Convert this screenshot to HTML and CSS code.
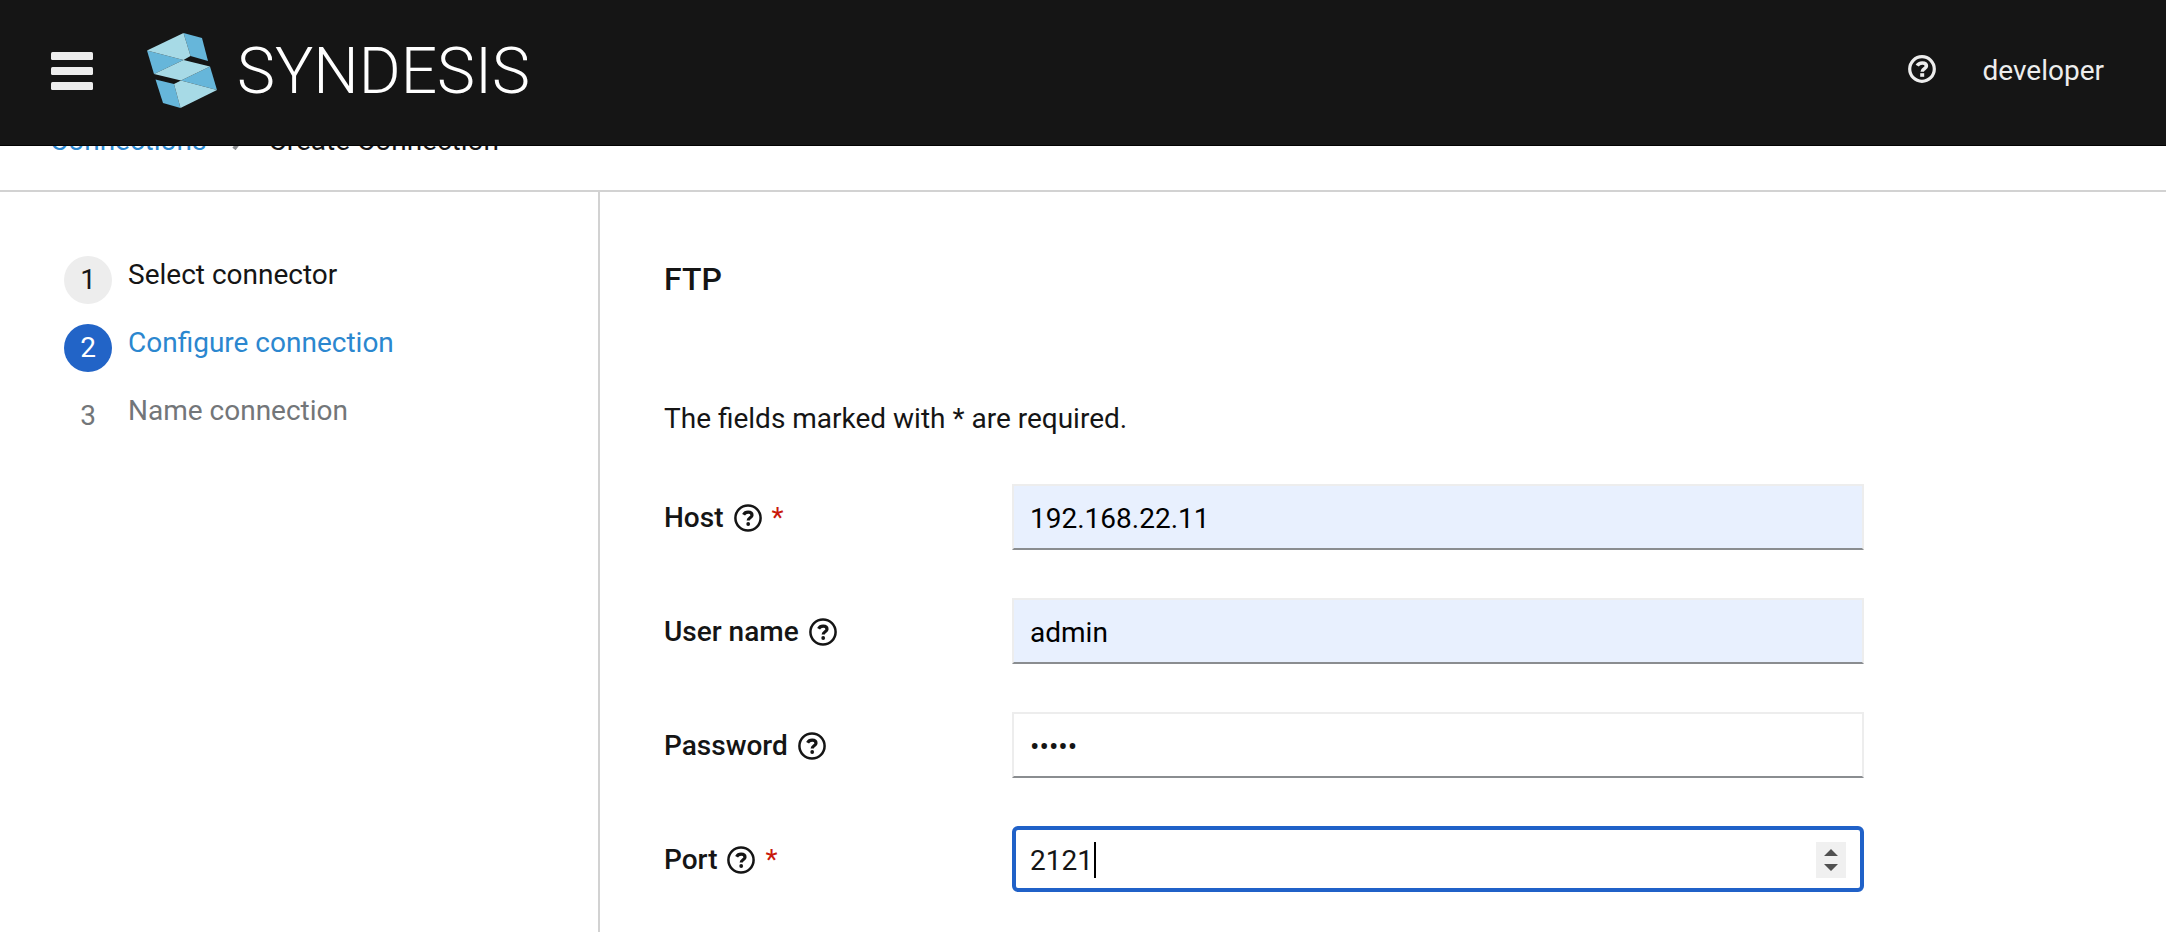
FILE: index.html
```
<!DOCTYPE html>
<html lang="en">
<head>
<meta charset="utf-8">
<title>Syndesis</title>
<meta name="viewport" content="width=device-width, initial-scale=1">
<link rel="stylesheet" href="styles.css">
</head>
<body>
<svg class="sprite" aria-hidden="true">
  <symbol id="help" viewBox="0 0 28 28">
    <circle cx="14" cy="14" r="12.6" fill="none" stroke="currentColor" stroke-width="2.5"/>
    <path d="M9.6 10.800C10.600 8.800 12.200 8.200 14.100 8.200C16.600 8.200 18 9.400 18 11.200C18 13.800 14.200 13.800 14.200 16.500" fill="none" stroke="currentColor" stroke-width="3.2"/>
    <circle cx="14.2" cy="20" r="1.900" fill="currentColor"/>
  </symbol>
  <symbol id="help-bold" viewBox="0 0 28 28">
    <circle cx="14" cy="14" r="12.3" fill="none" stroke="currentColor" stroke-width="3.2"/>
    <path d="M9.200 10.700C10.500 8.500 12.200 8 14.200 8C16.900 8 18.400 9.200 18.400 11.100C18.400 14 14.200 13.700 14.200 16.800" fill="none" stroke="currentColor" stroke-width="3.600"/>
    <rect x="12.200" y="18.200" width="4" height="3.600" fill="currentColor"/>
  </symbol>
</svg>

<header class="masthead">
  <button class="menu-toggle" type="button" aria-label="Toggle navigation">
    <svg viewBox="0 0 42 38" width="42" height="38"><g fill="currentColor"><rect width="42" height="8" y="0" rx="1.5"/><rect width="42" height="8" y="15" rx="1.5"/><rect width="42" height="8" y="30" rx="1.5"/></g></svg>
  </button>
  <a class="brand" href="#">
    <svg class="brand-mark" viewBox="0 0 70 75" width="70" height="75" aria-hidden="true">
      <g fill="#66b6da"><path d="M36.500 0L55 5L61 28L43.500 23Z"/><path d="M0 17.500L36.500 27L7 41Z"/><path d="M63 33.500L70 57L34 47.500Z"/><path d="M8.500 46.500L27 51L33.500 75L16 70Z"/></g>
      <g fill="#a7dae6"><path d="M36.500 0L43.500 23L36.500 27L0 17.500Z"/><path d="M36.500 27L63 33.500L34 47.500L7 41Z"/><path d="M34 47.500L70 57L33.500 75L27 51Z"/></g>
    </svg>
    <span class="brand-name">SYNDESIS</span>
  </a>
  <div class="tools">
    <button class="tool tool-icon" type="button" aria-label="Help"><svg class="help-icon"><use href="#help-bold"/></svg></button>
    <button class="tool" type="button">developer</button>
  </div>
</header>

<main class="page">
  <nav class="breadcrumb" aria-label="Breadcrumb">
    <a href="#">Connections</a>
    <svg class="chevron" viewBox="0 0 10 18" width="10" height="18" aria-hidden="true"><path d="M2 1L8 9L2 17" fill="none" stroke="currentColor" stroke-width="4"/></svg>
    <span>Create Connection</span>
  </nav>
  <div class="wizard">
    <ol class="steps">
      <li class="step visited"><span class="step-number">1</span><span class="step-name">Select connector</span></li>
      <li class="step current" aria-current="step"><span class="step-number">2</span><span class="step-name">Configure connection</span></li>
      <li class="step"><span class="step-number">3</span><span class="step-name">Name connection</span></li>
    </ol>
    <section class="content">
      <h1 class="title">FTP</h1>
      <p class="hint">The fields marked with * are required.</p>
      <form class="form">
        <div class="field">
          <div class="label"><label for="host">Host</label><svg class="help-icon"><use href="#help"/></svg><span class="required">*</span></div>
          <input class="control filled" id="host" type="text" value="192.168.22.11">
        </div>
        <div class="field">
          <div class="label"><label for="username">User name</label><svg class="help-icon"><use href="#help"/></svg></div>
          <input class="control filled" id="username" type="text" value="admin">
        </div>
        <div class="field">
          <div class="label"><label for="password">Password</label><svg class="help-icon"><use href="#help"/></svg></div>
          <input class="control" id="password" type="password" value="admin">
        </div>
        <div class="field">
          <div class="label"><label for="port">Port</label><svg class="help-icon"><use href="#help"/></svg><span class="required">*</span></div>
          <div class="number">
            <input class="control active" id="port" type="number" value="2121">
            <span class="caret"></span>
            <span class="spinner"><svg viewBox="0 0 30 36" width="30" height="36" aria-hidden="true"><path d="M8 14L15 7L22 14ZM8 22L15 29L22 22Z" fill="#505050"/></svg></span>
          </div>
        </div>
      </form>
    </section>
  </div>
</main>
</body>
</html>
```
FILE: styles.css
```
* { box-sizing: border-box; }

body {
  margin: 0;
  background: #fff;
  color: #151515;
  font: 28px/42px Roboto, "Liberation Sans", sans-serif;
  overflow: hidden;
}

button {
  padding: 0;
  border: 0;
  background: none;
  color: inherit;
  font: inherit;
}

a { color: #2b87cf; text-decoration: none; }

.sprite { display: none; }

.help-icon { width: 28px; height: 28px; flex: none; display: block; }

.masthead {
  position: sticky;
  top: 0;
  z-index: 1;
  display: flex;
  align-items: center;
  height: 146px;
  padding: 0 62px 4px 51px;
  border-bottom: 1px solid #030303;
  background: #151515;
  color: #ededed;
}

.menu-toggle svg { display: block; }

.brand {
  display: flex;
  align-items: center;
  gap: 20px;
  margin-left: 54px;
  color: #fff;
}

.brand-name { padding-top: 2px; font-size: 64px; line-height: 74px; font-weight: 300; }

.tools {
  display: flex;
  align-items: center;
  gap: 46px;
  margin-left: auto;
}

.tool-icon { padding-bottom: 4px; }

.page {
  display: flex;
  flex-direction: column;
  min-height: calc(100vh - 120px);
  margin-top: -26px;
}

.breadcrumb {
  display: flex;
  align-items: center;
  gap: 26px;
  padding: 0 50px 28px;
  border-bottom: 2px solid #d2d2d2;
}

.chevron { color: #8a8d90; }

.wizard { display: flex; flex: 1; }

.steps {
  flex: none;
  width: 600px;
  margin: 0;
  padding: 64px 64px 0;
  border-right: 2px solid #d2d2d2;
  list-style: none;
}

.step {
  display: flex;
  align-items: flex-start;
  gap: 16px;
  margin-bottom: 20px;
  color: #737679;
}

.step-number {
  width: 48px;
  border-radius: 50%;
  line-height: 48px;
  text-align: center;
}

.step-name { line-height: 38px; }

.visited { color: #151515; }
.visited .step-number { background: #ededed; }
.current { color: #2b87cf; }
.current .step-number { background: #2264c7; color: #fff; }

.content { flex: 1; min-width: 0; padding: 64px; }

.title { margin: 0; font-size: 32px; line-height: 46px; font-weight: 500; }

.hint { margin: 96px 0 44px; }

.form { display: grid; gap: 48px; }

.field {
  display: grid;
  grid-template-columns: 348px minmax(0, 852px);
  align-items: center;
}

.label {
  display: flex;
  align-items: center;
  gap: 10px;
  padding-top: 2px;
  font-weight: 500;
}

.required { color: #c9190b; font-weight: 400; }

.control {
  display: block;
  width: 100%;
  height: 66px;
  padding: 2px 16px 0;
  border: 2px solid #ededed;
  border-bottom-color: #8a8d90;
  border-radius: 0;
  outline: 0;
  background: #fff;
  color: #151515;
  font: inherit;
}

.filled { background: #e8f0fe; color: #000; }

.active { padding: 2px 14px 0; border: 4px solid #2061c8; border-radius: 6px; appearance: textfield; }
.active::-webkit-inner-spin-button { appearance: none; }

.number { position: relative; }

.caret {
  position: absolute;
  left: 82px;
  top: 16px;
  width: 2px;
  height: 36px;
  background: #000;
}

.spinner {
  position: absolute;
  right: 18px;
  top: 16px;
  height: 36px;
  background: #f0f0f0;
}

.spinner svg { display: block; }
```
